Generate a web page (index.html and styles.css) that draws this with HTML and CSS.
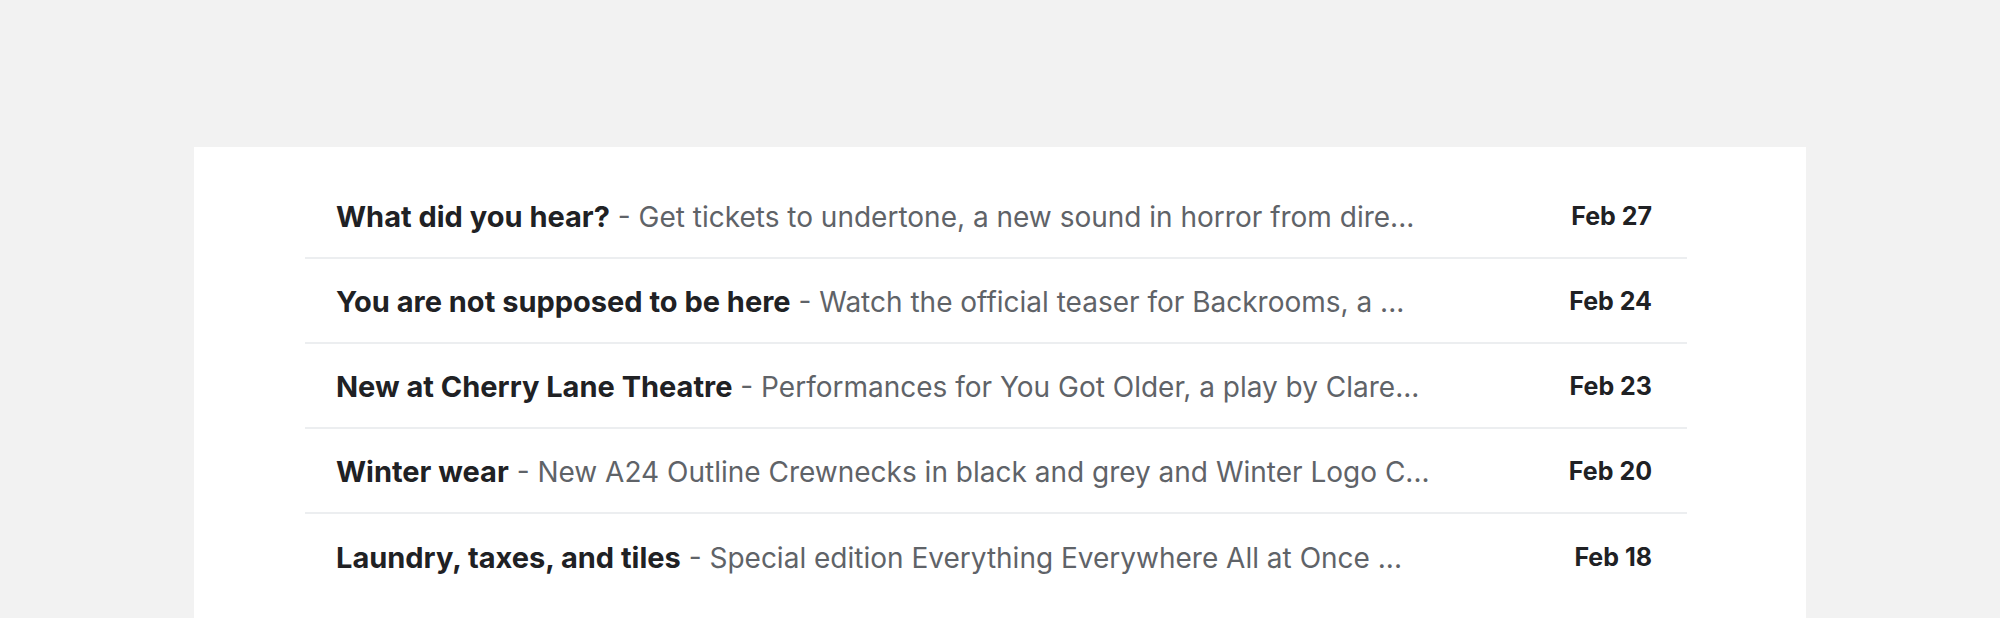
FILE: index.html
```html
<!DOCTYPE html>
<html lang="en">
  <head>
    <meta charset="UTF-8" />
    <title>Inbox</title>
    <link rel="stylesheet" href="styles.css">
  </head>
  <body>
    <div class="inbox">
      <ul class="mail-list">
        <li class="mail">
          <div class="mail-text">
            <span class="subject">What did you hear?</span>
            <span class="snippet">- Get tickets to undertone, a new sound in horror from dire...</span>
          </div>
          <div class="date">Feb 27</div>
        </li>
        <li class="mail">
          <div class="mail-text">
            <span class="subject">You are not supposed to be here</span>
            <span class="snippet">- Watch the official teaser for Backrooms, a ...</span>
          </div>
          <div class="date">Feb 24</div>
        </li>
        <li class="mail">
          <div class="mail-text">
            <span class="subject">New at Cherry Lane Theatre</span>
            <span class="snippet">- Performances for You Got Older, a play by Clare...</span>
          </div>
          <div class="date">Feb 23</div>
        </li>
        <li class="mail">
          <div class="mail-text">
            <span class="subject">Winter wear</span>
            <span class="snippet">- New A24 Outline Crewnecks in black and grey and Winter Logo C...</span>
          </div>
          <div class="date">Feb 20</div>
        </li>
        <li class="mail">
          <div class="mail-text">
            <span class="subject">Laundry, taxes, and tiles</span>
            <span class="snippet">- Special edition Everything Everywhere All at Once ...</span>
          </div>
          <div class="date">Feb 18</div>
        </li>
      </ul>
    </div>
  </body>
</html>
```

FILE: styles.css
```css
body {
  margin: 0;
  background-color: #f2f2f2;
  font-family: Inter, 'Noto Sans', sans-serif;
  -webkit-font-smoothing: antialiased;
}

.inbox {
  margin: 147px 194px 0 194px;
  padding: 27px 119px 0 111px;
  background-color: white;
  min-height: 471px;
}

.mail-list {
  margin: 0;
  padding: 0;
  list-style: none;
}

.mail {
  display: flex;
  align-items: center;
  box-sizing: border-box;
  height: 85px;
  padding: 3px 35px 0 31px;
  border-bottom: solid 2px #eceef0;
}

.mail:last-child {
  border-bottom: none;
}

.mail-text {
  flex: 1;
  white-space: nowrap;
  font-size: 28px;
  line-height: 40px;
}

.subject {
  color: #202124;
  font-size: 29px;
  font-weight: 700;
}

.snippet {
  color: #5f6368;
  font-weight: 400;
}

.date {
  flex: 0 0 auto;
  padding-bottom: 2px;
  font-size: 25px;
  line-height: 40px;
  font-weight: 700;
  color: #202124;
}
```
